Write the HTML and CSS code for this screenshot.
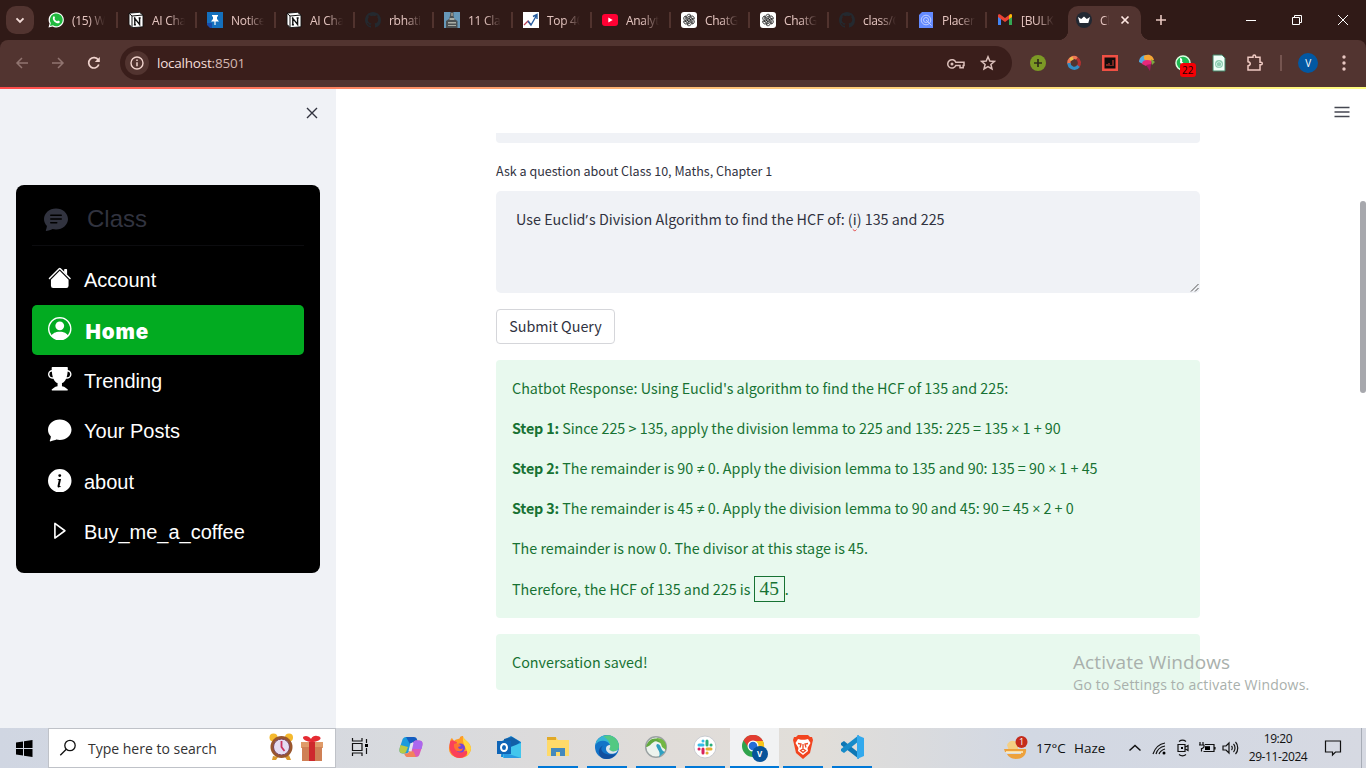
FILE: index.html
```html
<!DOCTYPE html>
<html lang="en">
<head>
<meta charset="utf-8">
<title>Class</title>
<link rel="stylesheet" href="styles.css">
</head>
<body>
<svg class="defs" aria-hidden="true">
  <symbol id="notion" viewBox="0 0 16 16"><path d="M1 1.2 11.5.3 15 3v11.8l-11 .9L1 12.2z" fill="#fff" stroke="#111" stroke-width=".9"/><path d="M1 1.2 4 4l11-1M4 4v11.5" fill="none" stroke="#111"/><path d="M6.8 12.6V6.4l4.8 6V6.2M5.9 6.3h1.6M5.9 12.7h2M10.6 6h2.1" fill="none" stroke="#111" stroke-width="1.4"/></symbol>
  <symbol id="github" viewBox="0 0 16 16"><path fill="#24292f" d="M8 0C3.58 0 0 3.58 0 8c0 3.54 2.29 6.53 5.47 7.59.4.07.55-.17.55-.38 0-.19-.01-.82-.01-1.49-2.01.37-2.53-.49-2.69-.94-.09-.23-.48-.94-.82-1.13-.28-.15-.68-.52-.01-.53.63-.01 1.08.58 1.23.82.72 1.21 1.87.87 2.33.66.07-.52.28-.87.51-1.07-1.78-.2-3.64-.89-3.64-3.95 0-.87.31-1.59.82-2.15-.08-.2-.36-1.02.08-2.12 0 0 .67-.21 2.2.82a7.6 7.6 0 0 1 4 0c1.53-1.04 2.2-.82 2.2-.82.44 1.1.16 1.92.08 2.12.51.56.82 1.27.82 2.15 0 3.07-1.87 3.75-3.65 3.95.29.25.54.73.54 1.48 0 1.07-.01 1.93-.01 2.2 0 .21.15.46.55.38A8 8 0 0 0 16 8c0-4.42-3.58-8-8-8z"/></symbol>
  <symbol id="gpt" viewBox="0 0 16 16"><rect width="16" height="16" rx="3" fill="#fff"/><g fill="none" stroke="#222" stroke-width=".85"><path id="petal" d="M5.700 6.700V4.600a2.300 2.300 0 0 1 4.200-1.300L6.800 5.100V9"/><use href="#petal" transform="rotate(60 8 8)"/><use href="#petal" transform="rotate(120 8 8)"/><use href="#petal" transform="rotate(180 8 8)"/><use href="#petal" transform="rotate(240 8 8)"/><use href="#petal" transform="rotate(300 8 8)"/></g></symbol>
</svg>

<div class="screen">
<header class="tabstrip">
  <button class="tab-search"><svg width="12" height="12" viewBox="0 0 12 12"><path d="m2.5 4.3 3.5 3.5 3.5-3.5" fill="none" stroke="#f3dcd8" stroke-width="1.9"/></svg></button>
  <div class="tab first"><svg class="fav" viewBox="0 0 16 16"><path d="M.5 15.5 1.6 11.600A7.600 7.600 0 1 1 4.500 14.500z" fill="#fff"/><path d="m2 14 .8-2.900A6.400 6.400 0 1 1 5 13.300z" fill="#20b93f"/><path d="M5.500 4.300c.8-.5 1.100.2 1.500 1.500.1.500-.6.800-.5 1.200.5 1.100 1.300 1.800 2.400 2.300.5.100.8-.9 1.200-.8.500.2 1.500.6 1.700.9.100 2-2.200 2.200-3.300 1.700C6.200 10.200 3.600 6.900 5.500 4.300z" fill="#fff"/></svg><span>(15) W</span></div>
  <div class="tab"><svg class="fav"><use href="#notion"/></svg><span>AI Cha</span></div>
  <div class="tab"><svg class="fav" viewBox="0 0 16 16"><path d="M0 0h16v16H4L0 12z" fill="#1470bd"/><path d="M0 11h5v5H3l-3-3z" fill="#184aaa"/><path d="M5 3h6v1.500H10V7l2 2.500H8.600V13H7.400V9.500H4L6 7V4.500H5z" fill="#fff"/></svg><span>Notice</span></div>
  <div class="tab"><svg class="fav"><use href="#notion"/></svg><span>AI Cha</span></div>
  <div class="tab"><svg class="fav"><use href="#github"/></svg><span>rbhati</span></div>
  <div class="tab"><svg class="fav" viewBox="0 0 16 16"><path d="M0 0h16v16H0z" fill="#6798b9"/><path d="M6.500 0h3v4l1 3 3 2v7H2V9l3-2 1-3z" fill="#4c5153"/><path d="M5.500 6h5v2h-5zM4 10h8v1.500H4zM4 13h8v1H4z" fill="#a9aca4"/><path d="M7 1h2v3H7z" fill="#8e8c84"/></svg><span>11 Cla</span></div>
  <div class="tab"><svg class="fav" viewBox="0 0 16 16"><path d="M0 0h16v16H0z" fill="#fff"/><path d="m1 13 4-4 3 4" fill="none" stroke="#bd4055" stroke-width="1.300"/><path d="m5 9 3 4 5.500-9.500M10 4.500 14 2.500v4.500" fill="none" stroke="#275d9f" stroke-width="1.400"/></svg><span>Top 40</span></div>
  <div class="tab"><svg class="fav" viewBox="0 0 16 16"><rect y="2" width="16" height="12" rx="3" fill="#ff0033"/><path d="m6.300 5.500 4.400 2.500-4.400 2.500z" fill="#fff"/></svg><span>Analyt</span></div>
  <div class="tab"><svg class="fav"><use href="#gpt"/></svg><span>ChatG</span></div>
  <div class="tab"><svg class="fav"><use href="#gpt"/></svg><span>ChatG</span></div>
  <div class="tab"><svg class="fav"><use href="#github"/></svg><span>class/C</span></div>
  <div class="tab"><svg class="fav" viewBox="0 0 16 16"><path d="M4 0h11v16H1V3z" fill="#638aff"/><g fill="none" stroke="#c8d5ff" stroke-width=".9"><circle cx="8" cy="8" r="4.800"/><circle cx="8" cy="8" r="2.500"/><path d="m8 8 5.500 5.500"/></g></svg><span>Placen</span></div>
  <div class="tab last"><svg class="fav" viewBox="0 0 16 16"><path d="M1 4v9h3V6z" fill="#4285f4"/><path d="M12 6v7h3V4z" fill="#34a853"/><path d="M1 5V3.500C1 2 2.500 2 3.500 2.700L8 6l4.500-3.300C13.500 2 15 2 15 3.500V5L8 10z" fill="#ea4335"/><path d="M12 4.500V7l3-2V3.500c0-1.500-1.500-1.500-2.500-.8z" fill="#fbbc04"/></svg><span>[BULK</span></div>
  <div class="tab active"><svg class="fav" viewBox="0 0 16 16"><circle cx="8" cy="8" r="8" fill="#222832"/><path d="m2 5 3.200 2L8 4.500 10.800 7 14 5l-1.700 6H3.700z" fill="#fff"/></svg><span>Cl</span><svg class="close" width="10" height="10" viewBox="0 0 10 10"><path d="m1.500 1.500 7 7m0-7-7 7" stroke="#ffe7e2" stroke-width="1.700"/></svg></div>
  <svg class="plus" width="12" height="12"><path d="M6 1v10M1 6h10" stroke="#e8c7c1" stroke-width="1.600"/></svg>
  <div class="controls"><svg width="12" height="12"><path d="M1 6.500h10" stroke="#fff"/></svg><svg width="12" height="12"><path d="M1.500 3.500h7v7h-7zM3.500 3V1.500h7v7H9" fill="none" stroke="#fff"/></svg><svg width="12" height="12"><path d="m1 1 10 10M11 1 1 11" stroke="#fff"/></svg></div>
</header>

<div class="toolbar">
  <svg class="nav-i" viewBox="0 0 16 16"><path d="M14 8H3m5-5L3 8l5 5" fill="none" stroke="#917470" stroke-width="1.500"/></svg>
  <svg class="nav-i" viewBox="0 0 16 16"><path d="M2 8h11M8 3l5 5-5 5" fill="none" stroke="#917470" stroke-width="1.500"/></svg>
  <svg class="nav-i" viewBox="0 0 16 16"><path d="M12.800 9.500A5.200 5.200 0 1 1 12.300 5" fill="none" stroke="#f0d3cd" stroke-width="1.700"/><path d="M13.800 2v5h-5z" fill="#f0d3cd"/></svg>
  <div class="omnibox">
    <span class="site-info"><svg width="14" height="14" viewBox="0 0 14 14"><circle cx="7" cy="7" r="6" fill="none" stroke="#f0d3cd" stroke-width="1.400"/><path d="M7 6.200v4M7 3.600v1.500" stroke="#f0d3cd" stroke-width="1.500"/></svg></span>
    <span class="url">localhost<i>:8501</i></span>
    <svg class="key" width="20" height="12" viewBox="0 0 20 12"><path d="M9.800 4.300H18v3.200h-.8v2.200H14V7.500H9.800a4.200 4.200 0 1 1 0-3.200z" fill="none" stroke="#dcc0bb" stroke-width="1.500"/><circle cx="6" cy="5.900" r="1.500" fill="#dcc0bb"/></svg>
    <svg class="star" width="16" height="16" viewBox="0 0 16 16"><path d="m8 1.800 1.800 4.200 4.600.4-3.500 3 1.100 4.500L8 11.500l-4 2.400 1.100-4.500-3.500-3L6.200 6z" fill="none" stroke="#dcc0bb" stroke-width="1.500"/></svg>
  </div>
  <div class="extensions">
    <svg viewBox="0 0 18 18"><circle cx="9" cy="9" r="8" fill="#7c9925"/><path d="M9 5v8M5 9h8" stroke="#302c19" stroke-width="1.700"/></svg>
    <svg viewBox="0 0 18 18"><g fill="none" stroke-width="3.200"><path d="M4 10a5.200 5.200 0 0 1 8-5.500" stroke="#ee7754"/><path d="M12 4.500a5.200 5.200 0 0 1 1 8" stroke="#b33131"/><path d="M13.500 12A5.200 5.200 0 0 1 4 9" stroke="#338dc6"/><path d="M5 5.500 8 4" stroke="#e9be4a"/></g></svg>
    <svg viewBox="0 0 18 18"><path d="M1 1h16v16H1z" fill="#ef5044"/><path d="M3.500 3.500h11v11h-11z" fill="#100b0a"/><path d="M6 12v-2m2 2V9m2 3v-1m2 1V6" stroke="#bc3930" stroke-width="1.200"/></svg>
    <svg viewBox="0 0 18 18"><path d="M1 8C1 4 4 1 8 1l1 6-4 3z" fill="#52a9df"/><path d="M6 2c5-3 9 0 10 4l-6 2-4-3z" fill="#f4a536"/><path d="M4 10c0-4 5-5 10-3l-1 4-5 1z" fill="#e7287b"/><path d="m13 5 4 3-3 3z" fill="#79aa3f"/><path d="m8 11 5-1-1 7z" fill="#a71762"/></svg>
    <span class="wa"><svg viewBox="0 0 18 18"><circle cx="9" cy="9" r="7" fill="#20b953" stroke="#d9ffe1" stroke-width="1.500"/><path d="M6 5c2 0 1 2 1 3l3 3 3 1" stroke="#fff" stroke-width="2" fill="none"/></svg><b>22</b></span>
    <svg viewBox="0 0 18 18"><path d="M3 1h9l3 3v13H3z" fill="#f0fff8" stroke="#418467"/><circle cx="9" cy="10" r="4" fill="#8dccb1"/><path d="m6.500 9 2.500-1.500L11.500 9v2.500L9 13l-2.500-1.500z" fill="none" stroke="#c8eedd"/></svg>
    <svg viewBox="0 0 18 18"><path d="M2 3.200h5v-1a1.300 1.300 0 0 1 2.600 0v1H14v5h1a1.300 1.300 0 0 1 0 2.600h-1V16H2v-4.200c3-.5 3-3.600 0-4.100z" fill="none" stroke="#efc9c2" stroke-width="1.500"/></svg>
  </div>
  <span class="sep"></span><span class="avatar">V</span>
  <svg class="dots" width="6" height="18"><g fill="#e8c7c1"><circle cx="3" cy="3" r="1.700"/><circle cx="3" cy="9" r="1.700"/><circle cx="3" cy="15" r="1.700"/></g></svg>
</div>

<main class="page">
  <div class="rainbow"></div>
  <aside class="sidebar">
    <svg class="collapse" width="12" height="12" viewBox="0 0 12 12"><path d="m1 1 10 10M11 1 1 11" stroke="#31333f" stroke-width="1.400"/></svg>
    <nav class="menu">
      <div class="menu-title"><svg viewBox="0 0 16 16"><path fill-rule="evenodd" d="M16 8c0 3.866-3.582 7-8 7a9.060 9.060 0 0 1-2.347-.306c-.584.296-1.925.864-4.181 1.234-.2.032-.352-.176-.273-.362.354-.836.674-1.950.77-2.966C.744 11.370 0 9.760 0 8c0-3.866 3.582-7 8-7s8 3.134 8 7zM4.500 5a.5.500 0 0 0 0 1h7a.5.500 0 0 0 0-1h-7zm0 2.500a.5.500 0 0 0 0 1h7a.5.500 0 0 0 0-1h-7zm0 2.500a.5.500 0 0 0 0 1h4a.5.500 0 0 0 0-1h-4z"/></svg><span>Class</span></div>
      <hr>
      <a><svg viewBox="0 0 16 16"><path fill-rule="evenodd" d="m8 3.293 6 6V13.500a1.500 1.500 0 0 1-1.500 1.500h-9A1.500 1.500 0 0 1 2 13.500V9.293l6-6zm5-.793V6l-2-2V2.500a.5.500 0 0 1 .5-.5h1a.5.500 0 0 1 .5.500z"/><path d="M7.293 1.500a1 1 0 0 1 1.414 0l6.647 6.646a.5.500 0 0 1-.708.708L8 2.207 1.354 8.854a.5.500 0 1 1-.708-.708L7.293 1.500z"/></svg><span>Account</span></a>
      <a class="selected"><svg viewBox="0 0 16 16"><path d="M11 6a3 3 0 1 1-6 0 3 3 0 0 1 6 0z"/><path fill-rule="evenodd" d="M0 8a8 8 0 1 1 16 0A8 8 0 0 1 0 8zm8-7a7 7 0 0 0-5.468 11.370C3.242 11.226 4.805 10 8 10s4.757 1.225 5.468 2.370A7 7 0 0 0 8 1z"/></svg><span>Home</span></a>
      <a><svg viewBox="0 0 16 16"><path d="M2.500.5A.5.500 0 0 1 3 0h10a.5.500 0 0 1 .5.500c0 .538-.012 1.050-.034 1.536a3 3 0 1 1-1.133 5.890c-.79 1.865-1.878 2.777-2.833 3.011v2.173l1.425.356c.194.048.377.135.537.255L13.300 15.100a.5.500 0 0 1-.3.900H3a.5.500 0 0 1-.3-.9l1.838-1.379c.16-.12.343-.207.537-.255L6.500 13.110v-2.173c-.955-.234-2.043-1.146-2.833-3.012a3 3 0 1 1-1.132-5.890A33.076 33.076 0 0 1 2.500.5zm.099 2.540a2 2 0 0 0 .72 3.935c-.333-1.050-.588-2.346-.72-3.935zm10.083 3.935a2 2 0 0 0 .72-3.935c-.133 1.590-.388 2.885-.72 3.935z"/></svg><span>Trending</span></a>
      <a><svg viewBox="0 0 16 16"><path d="M8 15c4.418 0 8-3.134 8-7s-3.582-7-8-7-8 3.134-8 7c0 1.760.743 3.370 1.970 4.600-.097 1.016-.417 2.130-.771 2.966-.079.186.074.394.273.362 2.256-.37 3.597-.938 4.180-1.234A9.060 9.060 0 0 0 8 15z"/></svg><span>Your Posts</span></a>
      <a><svg viewBox="0 0 16 16"><path d="M8 16A8 8 0 1 0 8 0a8 8 0 0 0 0 16zm.93-9.412-1 4.705c-.07.340.029.533.304.533.194 0 .487-.07.686-.246l-.088.416c-.287.346-.92.598-1.465.598-.703 0-1.002-.422-.808-1.319l.738-3.468c.064-.293.006-.399-.287-.47l-.451-.081.082-.381 2.290-.287zM8 5.500a1 1 0 1 1 0-2 1 1 0 0 1 0 2z"/></svg><span>about</span></a>
      <a><svg viewBox="0 0 16 16"><path d="M4.700 3v10l6.800-5z" fill="none" stroke="#fff" stroke-width="1.100" stroke-linejoin="round"/></svg><span>Buy_me_a_coffee</span></a>
    </nav>
  </aside>
  <section class="content">
    <svg class="burger" width="16" height="12"><path d="M.5 1.500h15M.5 6h15M.5 10.500h15" stroke="#454751" stroke-width="1.500"/></svg>
    <div class="column">
      <div class="select-end"></div>
      <label>Ask a question about Class 10, Maths, Chapter 1</label>
      <div class="question">Use Euclid<span class="apos">’</span>s Division Algorithm to find the HCF of: (<u>i</u>) 135 and 225<svg class="grip" width="9" height="9"><path d="m1 8.500 7.500-7.500M5 8.500 8.500 5" stroke="#555" fill="none"/></svg></div>
      <button class="submit">Submit Query</button>
      <div class="success">
        <p>Chatbot Response: Using Euclid's algorithm to find the HCF of 135 and 225:</p>
        <p><b>Step 1:</b> Since 225 &gt; 135, apply the division lemma to 225 and 135: 225 = 135 <span class="op">×</span> 1 + 90</p>
        <p><b>Step 2:</b> The remainder is 90 <span class="op">≠</span> 0. Apply the division lemma to 135 and 90: 135 = 90 <span class="op">×</span> 1 + 45</p>
        <p><b>Step 3:</b> The remainder is 45 <span class="op">≠</span> 0. Apply the division lemma to 90 and 45: 90 = 45 <span class="op">×</span> 2 + 0</p>
        <p>The remainder is now 0. The divisor at this stage is 45.</p>
        <p class="answer">Therefore, the HCF of 135 and 225 is <span class="boxed">45</span>.</p>
      </div>
      <div class="success saved"><p>Conversation saved!</p></div>
    </div>
    <div class="thumb"></div>
    <div class="activate"><div>Activate Windows</div><p>Go to Settings to activate Windows.</p></div>
  </section>
</main>

<footer class="taskbar">
  <div class="start"><svg width="17" height="17" viewBox="0 0 17 17"><path d="m0 2.500 7-1V8H0zM8 1.300 16.500 0v8H8zM0 9h7v6.500l-7-1zM8 9h8.500v8L8 15.700z"/></svg></div>
  <div class="search"><svg width="18" height="18" viewBox="0 0 18 18"><circle cx="11" cy="6.500" r="5.200" fill="none" stroke="#111" stroke-width="1.300"/><path d="m7.300 10.300-6 6" stroke="#111" stroke-width="1.300"/></svg><span>Type here to search</span>
    <svg class="gift" width="54" height="30" viewBox="0 0 54 30"><circle cx="4.500" cy="4.500" r="4" fill="#f5b92d"/><circle cx="20" cy="4.500" r="4" fill="#f5b92d"/><path d="m4 23-1 4h4l2-3zM16 24l2 3h4l-2-5z" fill="#db9b2b"/><circle cx="12.500" cy="14" r="11" fill="#99562e"/><circle cx="12.500" cy="14" r="8" fill="#e5dcf2" stroke="#77405a"/><path d="M12.500 8v6l3 4" fill="none" stroke="#cb315e" stroke-width="1.800"/><path d="M32 9h23v6H32z" fill="#df9b69"/><path d="M33 14h20v14H33z" fill="#cf8055"/><path d="M40 9h6v19h-6z" fill="#ce292d"/><path d="M42 9c-9-1-10-6-5-6 3 0 5 3 5 3s2-4 6-3c7 1 3 6-6 6z" fill="#e52b32"/></svg>
  </div>
  <div class="apps">
    <div class="app taskview"><svg width="18" height="18" viewBox="0 0 18 18"><path d="M1.500 0v3h9.500V0M1.500 18v-3H11v3M1.500 5.500H11v7H1.500zM15.500 1v4M15.500 10v6" fill="none" stroke="#111" stroke-width="1.200"/><path d="M14 6h3v3h-3z"/></svg></div>
    <div class="app"><svg viewBox="0 0 24 24"><path d="M7 2h7l-4 14c-.7 2-2 2.500-4 2.500H4c-4 0-4-3-3-6.500L3 6c.8-3 2-4 4-4z" fill="#1a9bdc"/><path d="M1.500 10 9 12l-2 5c-1 1.500-2 1.500-3 1.500-4 0-4-3-3-6.500z" fill="#b9ca43"/><path d="M7 2h8c3 0 3 3 4 5h-4c-2 0-3 1-3.500 3z" fill="#145dc0"/><path d="M17 22h-7l4-14c.7-2 2-2.500 4-2.500h2c4 0 4 3 3 6.500l-2 6c-.8 3-2 4-4 4z" fill="#db59b9"/><path d="M14 8c.7-2 2-2.500 4-2.500h2c4 0 4 3 3 6.500l-.5 2H12.500z" fill="#aa68ee"/><path d="M17 22H9c-3 0-3-2-4-3.500h2c2 0 3-1 3.500-3l4 1z" fill="#f2835b"/><path d="m11.500 8-2 8 3 .5 2-8.500z" fill="#e3e4ec"/></svg></div>
    <div class="app"><svg viewBox="0 0 24 24"><path d="M2 8c0-4 2-5 2-5l2 3c3-3 6-1 6-4 1-1 2-1 3-1 0 4 7 5 8 12 0 6-5 10-11 10S0 19 1 12z" fill="#ff9b26"/><path d="M2 7c1-2 3-2 4-1l3 1-1 4c0 5 7 7 13 4-2 5-5 8-9 8C4 23 0 15 2 7z" fill="#fb4059"/><path d="M15 1c0 4 7 5 8 12 0 3-2 6-4 8 2-8-5-8-4-20z" fill="#ffd63d"/><circle cx="12.500" cy="13" r="4.500" fill="#7444d8"/><path d="M6 9c4-1 6 0 7 2l-3 1c1 3 4 2 5 1-1 6-10 4-9-4z" fill="#ff7430"/></svg></div>
    <div class="app"><svg viewBox="0 0 24 24"><path d="m5 6 9-5 10 6v15H4z" fill="#1689d8"/><path d="m7 4 8-2 8 5-8 7-8-5z" fill="#1260a7"/><path d="m6 15 18-7v15H6z" fill="#42c6ed"/><path d="m6 17 18 6H7z" fill="#2a9ae2"/><path d="M0 6h14v13H0z" fill="#0f65b7"/><ellipse cx="7" cy="12.500" rx="3" ry="3.500" fill="none" stroke="#fff" stroke-width="2"/></svg></div>
    <div class="app open"><svg viewBox="0 0 24 24"><path d="M1 2h9l2 3h11v16H1z" fill="#ffda69"/><path d="M1 2h9v3H1z" fill="#e1a927"/><path d="M5 21v-8h14v8h-5v-4h-4v4z" fill="#4489bd"/></svg></div>
    <div class="app open"><svg viewBox="0 0 24 24"><circle cx="12" cy="12" r="12" fill="#1374c8"/><path d="M.3 10C3-3 22-3 24 11c.3 5-4 6-7 5-4-1-1-3-2-6C12 4 3 5 .3 10z" fill="#36b5d5"/><path d="M14 .2c6 1 10 6 10 11 0 4-4 6-7.500 5-4-1-1-3-1.500-6C15 6 11 3 8 1z" fill="#52c982"/><path d="M9 10c-6 3-2 12 12 9-3 5-10 6-14 4-5-4-4-11 2-13z" fill="#124f9f"/><path d="M15 10c1 3-2 4 .5 5.500 2 1.500 5 1 7.500-.5-1 2-2 3-4 3.500-4 1-8-1-8-5 0-2 1.500-3.500 4-3.500z" fill="#dfe6ea"/></svg></div>
    <div class="app open"><svg viewBox="0 0 24 24"><circle cx="12" cy="12" r="10.300" fill="#edf3ee" stroke="#9ba2a3" stroke-width="1.500"/><path d="M2 12C4 3 14 0 19 9l-5-2C9 4 7 12 2 12z" fill="#62a83f"/><path d="M12 3c9 0 11 6 10 12l-4-3C17 8 15 5 12 3z" fill="#72b743"/><path d="M13 9c5 0 3 7 8 8l-6 5c3-6-5-10-2-13z" fill="#2f9fc0"/></svg></div>
    <div class="app open"><svg viewBox="0 0 24 24"><circle cx="12" cy="12" r="11" fill="#fff" stroke="#c9cbd0"/><g stroke-width="3" stroke-linecap="round"><path d="M10 6v.1M6 10h4" stroke="#35bde8"/><path d="M14 6v4M18 10h.1" stroke="#2aaf7c"/><path d="M14 14h4M14 18h.1" stroke="#e6ad32"/><path d="M10 14v4M6 14h.1" stroke="#d8235d"/></g></svg></div>
    <div class="app open current"><svg viewBox="0 0 24 24"><circle cx="11" cy="11" r="11" fill="#2fa34b"/><path d="M1.500 5.500A11 11 0 0 1 21 6H11l-4 7z" fill="#e23c31"/><path d="M21 6a11 11 0 0 1-10 16l5-9-5-7z" fill="#fbc51b"/><circle cx="11" cy="11" r="5.500" fill="#fff"/><circle cx="11" cy="11" r="4.300" fill="#276ed7"/></svg><b class="mini">V</b></div>
    <div class="app open"><svg viewBox="0 0 24 24"><path d="M7 0h10l2 2h2l1 3-.5 2-2.500 11-7 6-7-6L2.500 7 2 5l1-3h2z" fill="#f2441f"/><path d="m7 4 3 .8h4l3-.8 2.500 4-3 5 .5 3-5 4-5-4 .5-3-3-5z" fill="#fff"/><path d="m7 8.500 3 .5-1 3.500M17 8.500l-3 .5 1 3.500m-5.500 3L12 14l2.500 1.500L12 17.500zM12 9v5" fill="none" stroke="#ed4a25" stroke-width="1.300"/></svg></div>
    <div class="app open"><svg viewBox="0 0 24 24"><path d="m1 8 3-2 15 12v6L1 10z" fill="#0d77b5"/><path d="m1 16 3 2L19 6V0L1 14z" fill="#168bc9"/><path d="m17 0 7 3v18l-7 3z" fill="#32a9ed"/></svg></div>
  </div>
  <div class="weather"><svg width="26" height="24" viewBox="0 0 26 24"><path d="M3 9c2-5 8-6 11-1v7H5z" fill="#f4cf83"/><path d="M0 13h22c1 6-4 10-10 10C7 23 4 20 3 18h14v-2H1z" fill="#eda13c"/><path d="M2 16h17" stroke="#fff0c5" stroke-width="1.500"/><circle cx="17.500" cy="6" r="6" fill="#c42b1c"/><text x="17.500" y="9" text-anchor="middle" class="count">1</text></svg><span class="temp">17°C</span><span class="haze">Haze</span></div>
  <div class="tray">
    <svg viewBox="0 0 18 18"><path d="m3.500 11.500 5.500-5 5.500 5" fill="none" stroke="#111" stroke-width="1.500"/></svg>
    <svg viewBox="0 0 18 18"><g fill="none" stroke="#111" stroke-width="1.200"><path d="M3 15C5 9 9 5 15 4M6 15c1-4 4-7 9-8M9 15c1-3 3-4 6-5" /></g><circle cx="14" cy="14" r="1.500"/></svg>
    <svg viewBox="0 0 18 18"><path d="M5 2.500c2-1.500 5-1.500 7 0M5 15.500c2 1.500 5 1.500 7 0M4 5.500h7v7H4zM11.500 8 14 6.500v5L11.500 10" fill="none" stroke="#111" stroke-width="1.200"/><path d="M7 8h2v2H7z"/></svg>
    <svg viewBox="0 0 18 18"><path d="M7 5.500h9v7H5.500M17 8v2.500M2 3v3m3-3v3M1 6h5v2L4.500 9.500H3.500v3" fill="none" stroke="#111" stroke-width="1.200"/><path d="M7 7.200h5v3.800H7z"/></svg>
    <svg viewBox="0 0 18 18"><path d="M1 7h3l3-3v10l-3-3H1zM9.500 7c1 1 1 3 0 4m2-6c2 2 2 6 0 8m2-10c3 3 3 9 0 12" fill="none" stroke="#111" stroke-width="1.200"/></svg>
  </div>
  <div class="clock"><span class="time">19:20</span><span class="date">29-11-2024</span></div>
  <svg class="notice" width="18" height="18" viewBox="0 0 18 18"><path d="M1.500 2h15v11h-5L8.500 16v-3h-7z" fill="none" stroke="#111" stroke-width="1.200"/></svg>
  <span class="peek"></span>
</footer>
</div>
</body>
</html>
```

FILE: styles.css
```css
* { box-sizing: border-box; }
body { margin: 0; overflow: hidden; font-family: "Open Sans", sans-serif; }
p { margin: 0; }
svg { display: block; flex: none; }
button { font: inherit; }
.defs { position: absolute; width: 0; height: 0; }
.screen { width: 1366px; height: 768px; display: flex; flex-direction: column; background: #321a17; }

.tabstrip { height: 40px; display: flex; align-items: center; background: #301a17; color: #e5c5c0; }
.tab-search { width: 28px; height: 28px; margin: 0 5px 0 6px; padding: 0; border: 0; border-radius: 10px; background: #523430; display: flex; align-items: center; justify-content: center; }
.tab { width: 79px; height: 16px; display: flex; align-items: center; gap: 8px; padding-left: 10px; border-right: 2px solid #51332e; font-size: 12px; letter-spacing: -.3px; white-space: nowrap; flex: none; }
.tab.first { padding-left: 9px; }
.tab span { width: 33px; padding-top: 1px; overflow: hidden; line-height: 18px; -webkit-mask-image: linear-gradient(90deg, #000 50%, transparent); mask-image: linear-gradient(90deg, #000 50%, transparent); }
.tab.last { border-color: transparent; }
.fav { width: 16px; height: 16px; }
.tab.active { position: relative; width: 73px; height: 34px; margin: 6px 0 0 2px; padding-left: 8px; padding-bottom: 6px; border: 0; border-radius: 10px 10px 0 0; background: #523430; }
.tab.active::before, .tab.active::after { content: ""; position: absolute; bottom: 0; width: 10px; height: 10px; }
.tab.active::before { left: -10px; background: radial-gradient(circle at 0 0, transparent 10px, #523430 10.5px); }
.tab.active::after { right: -10px; background: radial-gradient(circle at 100% 0, transparent 10px, #523430 10.5px); }
.tab.active span { width: 9px; }
.close { margin-left: 3px; }
.plus { margin-left: 14px; }
.controls { margin-left: auto; display: flex; gap: 34px; padding-right: 17px; }

.toolbar { height: 47px; display: flex; align-items: center; background: #523430; border-radius: 8px 8px 0 0; padding: 0 19px 1px 14px; }
.nav-i { width: 16px; height: 16px; margin-right: 20px; }
.nav-i:nth-child(3) { margin-right: 18px; }
.omnibox { width: 892px; height: 34px; border-radius: 17px; background: #3a1e1b; display: flex; align-items: center; padding: 0 16px 0 5px; color: #f6dfdb; }
.site-info { width: 24px; height: 24px; border-radius: 50%; background: #523430; display: flex; align-items: center; justify-content: center; margin-right: 8px; }
.url { font-size: 13.5px; letter-spacing: -.22px; }
.url i { font-style: normal; color: #d3b6b0; }
.key { margin: 2px 14px 0 auto; }
.extensions { display: flex; gap: 18.2px; margin-left: 17px; }
.extensions svg { width: 18px; height: 18px; }
.wa { position: relative; }
.wa b { position: absolute; left: 6px; top: 9px; width: 16px; height: 14px; border-radius: 3px; background: #f60005; color: #220000; font: 10px/14px "Open Sans", sans-serif; text-align: center; }
.sep { width: 2px; height: 16px; background: #765550; margin-left: 16px; }
.avatar { width: 20px; height: 20px; margin-left: 16px; border-radius: 50%; background: #0258a3; color: #fff; font-size: 10px; line-height: 20px; text-align: center; }
.dots { margin-left: auto; }

.page { position: relative; height: 641px; display: flex; background: #fff; }
.rainbow { position: absolute; top: 0; left: 0; width: 100%; height: 2px; background: linear-gradient(90deg, #ff4b4b, #ffbf79 50%, #fffd80); z-index: 1; }
.sidebar { width: 336px; background: #f0f2f6; padding: 20px 16px 0; display: flex; flex-direction: column; }
.collapse { align-self: flex-end; margin: 0 2px 66px 0; }
.menu { height: 388px; background: #000; border-radius: 8px; padding: 16px; font-family: "Liberation Sans", sans-serif; font-size: 20px; color: #fff; fill: #fff; }
.menu-title { height: 36px; padding-left: 12px; display: flex; align-items: center; gap: 19px; color: #31333f; fill: #31333f; font-size: 24px; }
.menu-title svg { width: 24px; height: 24px; }
.menu hr { margin: 8px 0; border: 0; border-top: 1px solid #0c0c0f; }
.menu a { height: 50px; margin-bottom: .6px; padding: 0 16px; border-radius: 5px; display: flex; align-items: center; gap: 12.5px; }
.menu a svg { width: 23.5px; height: 23.5px; margin-bottom: 2px; }
.menu a span { padding-top: 2px; }
.menu .selected { background: #02ab21; font-family: Inter, sans-serif; font-weight: 900; font-size: 20.5px; letter-spacing: .9px; gap: 14px; }
.menu .selected span { padding-top: 4px; }

.content { flex: 1; position: relative; padding: 46px 0 0 160px; color: #31333f; font-family: "Noto Sans CJK SC", sans-serif; font-size: 14.33px; line-height: 24px; }
.burger { position: absolute; right: 16px; top: 19px; }
.column { width: 704px; display: flex; flex-direction: column; align-items: stretch; }
.select-end { height: 10px; background: #f0f2f6; border-radius: 0 0 4px 4px; }
label { margin-top: 18px; height: 30px; line-height: 20px; font-size: 12.54px; }
.question { position: relative; height: 102px; background: #f0f2f6; border-radius: 5px; padding: 16px 20px; }
.question u { text-decoration: underline wavy #e34b4b 1px; text-underline-offset: 2px; }
.apos { font-family: "Open Sans", sans-serif; display: inline-block; width: 3.6px; line-height: 20px; }
.op { font-family: "Open Sans", sans-serif; display: inline-block; width: 8px; line-height: 20px; text-align: center; }
.grip { position: absolute; right: 1px; bottom: 1px; }
.submit { align-self: flex-start; width: 119px; height: 35px; margin: 16px 0; padding: 0 0 2px; border: 1px solid #d5d6da; border-radius: 4px; background: #fff; color: #31333f; }
.success { height: 258px; padding: 16px; border-radius: 4px; background: #e8f9ee; color: #177233; display: flex; flex-direction: column; gap: 16px; white-space: nowrap; }
.success p { height: 24px; }
.success b { letter-spacing: -.18px; }
.saved { height: 56px; margin-top: 16px; }
.success .answer { display: flex; align-items: center; height: 26px; white-space: pre; }
.boxed { border: 1px solid #177233; height: 26px; width: 31px; line-height: 24px; text-align: center; font-family: "Liberation Serif", serif; font-size: 19.4px; }
.thumb { position: absolute; right: 0; top: 114px; width: 6px; height: 192px; border-radius: 3px; background: #a7a8ad; }
.activate { position: absolute; left: 737px; top: 563px; color: #a9b0ac; font-family: "Open Sans", sans-serif; white-space: nowrap; }
.activate div { font-size: 19px; letter-spacing: .08px; }
.activate p { font-size: 14px; line-height: 22px; letter-spacing: .2px; }

.taskbar { height: 40px; display: flex; align-items: center; color: #111; background: linear-gradient(90deg, #d0d6e2, #d8dade 30%, #e0dcd9 48%, #e1ded9 60%, #d2d8e3 75%, #d6d9e2); }
.start { width: 48px; padding-left: 16px; }
.search { width: 288px; height: 40px; border: 1px solid #bfc2c8; background: #fff; display: flex; align-items: center; padding-left: 10px; gap: 11px; font-size: 14px; color: #333; white-space: nowrap; }
.gift { margin-left: auto; margin-right: 12px; }
.apps { display: flex; height: 40px; }
.app { position: relative; width: 49px; display: flex; align-items: center; justify-content: center; border-bottom: 2px solid transparent; flex: none; }
.app > svg { width: 24px; height: 24px; }
.app.taskview { width: 50.5px; padding-right: 3px; }
.app.taskview > svg { width: 18px; height: 18px; }
.app.open::after { content: ""; position: absolute; left: 4.5px; right: 4.5px; bottom: -2px; height: 2px; background: #0078d7; }
.app.current { background: #f1f2f3; }
.app.current::after { left: 0; right: 0; }
.mini { position: absolute; left: 22px; top: 18px; width: 16px; height: 16px; border-radius: 50%; background: #07539a; color: #fff; font-size: 8px; line-height: 16px; text-align: center; }
.weather { display: flex; align-items: center; margin-left: 127.5px; font-size: 13.5px; }
.count { font: 9px "Open Sans", sans-serif; fill: #fff; }
.temp { width: 38px; margin-left: 6px; }
.haze { width: 52px; }
.tray { display: flex; gap: 6px; }
.tray svg { width: 18px; height: 18px; }
.clock { width: 64px; margin-left: 6px; display: flex; flex-direction: column; align-items: center; font-size: 12px; line-height: 18px; white-space: nowrap; letter-spacing: -.4px; }
.notice { margin-left: 14px; }
.peek { width: 1px; height: 40px; margin-left: auto; margin-right: 4px; background: #a7acb6; }
```
